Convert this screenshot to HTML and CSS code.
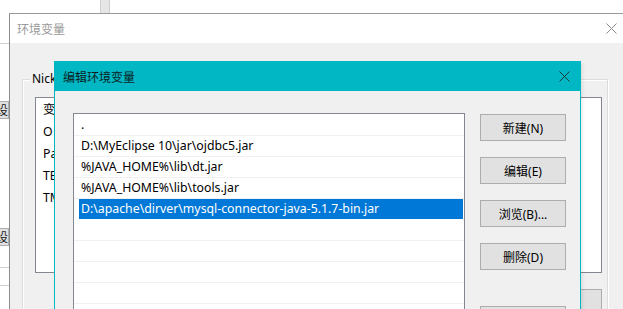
FILE: index.html
```html
<!DOCTYPE html>
<html>
<head>
<meta charset="utf-8">
<link rel="stylesheet" href="styles.css">
</head>
<body>
<div class="desk">
  <div class="back">
    <div class="back-scroll"></div>
    <div class="back-line l1"></div>
    <div class="back-btn b1"><span class="clip">设</span></div>
    <div class="back-btn b2"><span class="clip">设</span></div>
    <div class="back-line l2"></div>
    <div class="back-line l3"></div>
  </div>

  <div class="win outer">
    <div class="titlebar outer-title">
      <span class="title-text">环境变量</span>
      <span class="close gray">
        <svg width="11" height="11" viewBox="0 0 11 11"><path d="M0.5 0.5L10.5 10.5M10.5 0.5L0.5 10.5" stroke="#8a8a8a" stroke-width="1" fill="none"/></svg>
      </span>
    </div>
    <div class="outer-body">
      <div class="group">
        <span class="group-label">Nick</span>
        <div class="outer-list">
          <div class="oitem">变</div>
          <div class="oitem">O</div>
          <div class="oitem">Pa</div>
          <div class="oitem">TE</div>
          <div class="oitem">TM</div>
        </div>
        <div class="outer-btn"></div>
      </div>
    </div>
  </div>

  <div class="win inner">
    <div class="titlebar inner-title">
      <span class="title-text dark">编辑环境变量</span>
      <span class="close">
        <svg width="11" height="11" viewBox="0 0 11 11"><path d="M0.5 0.5L10.5 10.5M10.5 0.5L0.5 10.5" stroke="#1a3a3c" stroke-width="1" fill="none"/></svg>
      </span>
    </div>
    <div class="inner-body">
      <div class="list">
        <div class="row"><span class="cell">.</span></div>
        <div class="row"><span class="cell">D:\MyEclipse 10\jar\ojdbc5.jar</span></div>
        <div class="row"><span class="cell">%JAVA_HOME%\lib\dt.jar</span></div>
        <div class="row"><span class="cell">%JAVA_HOME%\lib\tools.jar</span></div>
        <div class="row sel"><span class="cell">D:\apache\dirver\mysql-connector-java-5.1.7-bin.jar</span></div>
        <div class="row"><span class="cell"></span></div>
        <div class="row"><span class="cell"></span></div>
        <div class="row"><span class="cell"></span></div>
        <div class="row"><span class="cell"></span></div>
      </div>
      <div class="buttons">
        <div class="btn">新建(N)</div>
        <div class="btn">编辑(E)</div>
        <div class="btn">浏览(B)...</div>
        <div class="btn">删除(D)</div>
        <div class="btn spaced"></div>
      </div>
    </div>
  </div>
</div>
</body>
</html>
```

FILE: styles.css
```css
* { box-sizing: border-box; }
html, body { margin: 0; padding: 0; }
body {
  width: 623px;
  height: 309px;
  overflow: hidden;
  background: #ffffff;
  font-family: "Noto Sans", "Noto Sans CJK SC", sans-serif;
  font-size: 12px;
  color: #000;
}
.desk { position: relative; width: 623px; height: 309px; overflow: hidden; }

/* background window fragments */
.back { position: absolute; left: 0; top: 0; width: 623px; height: 309px; }
.back-scroll {
  position: absolute; left: 100px; top: 0; width: 10px; height: 14px;
  background: #e6e6e6; border-left: 1px solid #cfcfcf; border-right: 1px solid #cfcfcf;
}
.back-line { position: absolute; left: 0; width: 10px; height: 1px; background: #d0d0d0; }
.l1 { top: 43px; }
.l2 { top: 267px; }
.l3 { top: 285px; }
.back-btn {
  position: absolute; left: 0; width: 9px; height: 18px;
  background: #e1e1e1; border: 1px solid #adadad; border-left: none;
  overflow: hidden;
}
.clip {
  display: block; margin-left: -4px;
  font-family: "Noto Sans CJK SC", sans-serif; font-size: 12px; line-height: 16px; color: #222;
}
.b1 { top: 101px; }
.b2 { top: 228px; }

/* windows */
.win { position: absolute; display: flex; flex-direction: column; }
.outer {
  left: 9px; top: 13px; width: 625px; height: 300px;
  border-left: 1px solid #8c8c8c; border-top: 1px solid #9a9a9a;
  background: #f0f0f0;
}
.titlebar { display: flex; align-items: center; justify-content: space-between; flex: none; }
.outer-title { height: 29px; background: #fff; padding-left: 7px; }
.title-text { font-family: "Noto Sans CJK SC", sans-serif; font-size: 12px; color: #9a9a9a; }
.title-text.dark { color: #0b1d1f; }
.close { width: 46px; display: flex; justify-content: center; align-items: center; }

.outer-body { flex: 1; padding: 36px 10px 0 12px; }
.group {
  position: relative;
  height: 260px;
  border: 1px solid #dcdcdc;
  box-shadow: inset 1px 1px 0 #fff, 1px 1px 0 #fff;
  padding: 17px 10px 0 12px;
  display: flex; flex-direction: column; align-items: flex-start;
  margin-right: 16px;
}
.group-label {
  position: absolute; left: 7px; top: -9px; padding: 0 2px;
  background: #f0f0f0; font-size: 12px; line-height: 16px; color: #000;
}
.outer-list {
  width: 567px; height: 176px; background: #fff; border: 1px solid #828790;
  padding: 1px 0 0 7px;
}
.oitem { height: 22px; line-height: 22px; font-size: 12.3px; }
.outer-btn {
  margin-top: 16px; margin-left: 545px; width: 22px; height: 24px;
  background: #e1e1e1; border: 1px solid #adadad;
}

.inner {
  left: 54px; top: 61px; width: 527px; height: 260px;
  border: 1px solid #00b7c3;
  background: #f0f0f0;
  box-shadow: 2px 2px 3px rgba(0,0,0,0.08);
}
.inner-title { height: 29px; background: #00b7c3; padding-left: 8px; }
.inner-title .close { width: 30px; margin-right: 1px; }

.inner-body { flex: 1; display: flex; align-items: flex-start; padding: 22px 0 0 18px; gap: 15px; }
.list {
  width: 392px; height: 220px; background: #fff; border: 1px solid #828790;
  padding-top: 1px;
}
.row {
  height: 21px; border-bottom: 1px solid #f0f0f0;
  display: flex;
}
.cell {
  flex: 1; margin: 0 1px 0 5px; padding-left: 2px;
  font-size: 12.3px; line-height: 20px; white-space: nowrap; color: #000;
}
.row.sel .cell { background: #0078d7; color: #fff; }
.row.sel { border-bottom-color: transparent; }

.buttons { display: flex; flex-direction: column; gap: 16px; padding-top: 1px; }
.btn {
  width: 86px; height: 27px; background: #e1e1e1; border: 1px solid #adadad;
  display: flex; align-items: center; justify-content: center;
  font-size: 12px; color: #000;
}
.btn.spaced { margin-top: 20px; }
```
